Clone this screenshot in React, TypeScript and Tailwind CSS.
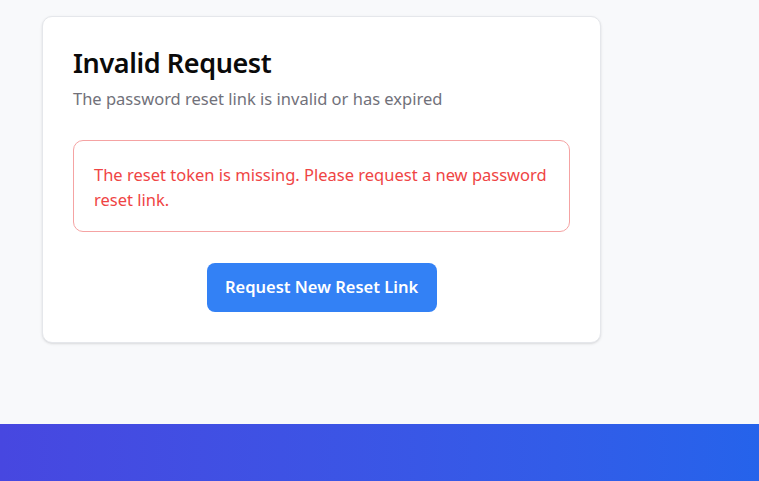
export default function App() {
  return (
    <div
      className="min-h-[481px] flex flex-col bg-[#f8f9fb]"
      style={{ fontFamily: '"Noto Sans", "Open Sans", sans-serif' }}
    >
      <div className="pl-[42px] pt-4 pb-[81px]">
        <div className="w-[559px] bg-white border border-[#e5e7eb] rounded-[10px] shadow-sm px-[30px] pt-[26px] pb-[30px]">
          <h1 className="text-[27px] leading-[40px] font-semibold text-[#0a0a0a] tracking-[-0.4px] mb-1">Invalid Request</h1>
          <p className="text-[16.5px] leading-6 text-[#71717a]">The password reset link is invalid or has expired</p>
          <div className="mt-[29px] border border-[#f5a3a3] rounded-[10px] px-5 pt-[21px] pb-[19px]">
            <p className="text-[16.5px] leading-[25px] text-[#ef4444]">
              The reset token is missing. Please request a new password reset link.
            </p>
          </div>
          <div className="flex justify-center mt-[31px]">
            <button className="w-[230px] h-[49px] rounded-lg bg-[#3381f5] text-white text-[16.5px] font-semibold">
              Request New Reset Link
            </button>
          </div>
        </div>
      </div>
      <div className="h-[58px] bg-gradient-to-r from-[#4747e0] to-[#2563eb]" />
    </div>
  );
}
